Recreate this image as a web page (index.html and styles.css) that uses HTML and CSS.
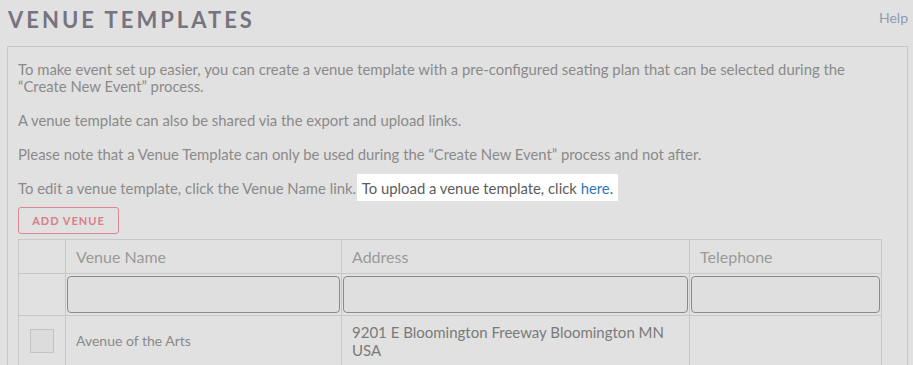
FILE: index.html
```html
<!DOCTYPE html>
<html lang="en">
<head>
    <meta charset="UTF-8">
    <title>Venue Templates</title>
    <link rel="stylesheet" href="styles.css">
</head>
<body>
    <div class="page-header">
        <h1 class="page-title">VENUE TEMPLATES</h1>
        <a href="#" class="help-link">Help</a>
    </div>

    <div class="panel">
        <p>To make event set up easier, you can create a venue template with a pre-configured seating plan that can be selected during the “Create New Event” process.</p>
        <p>A venue template can also be shared via the export and upload links.</p>
        <p>Please note that a Venue Template can only be used during the “Create New Event” process and not after.</p>
        <p>To edit a venue template, click the Venue Name link. <span class="tour-highlight">To upload a venue template, click <a href="#">here</a>.</span></p>

        <button type="button" class="add-button">ADD VENUE</button>

        <table class="venue-table">
            <thead>
                <tr class="head-row">
                    <th class="col-check"></th>
                    <th class="col-name">Venue Name</th>
                    <th class="col-address">Address</th>
                    <th class="col-phone">Telephone</th>
                </tr>
                <tr class="filter-row">
                    <td></td>
                    <td><input type="text"></td>
                    <td><input type="text"></td>
                    <td><input type="text"></td>
                </tr>
            </thead>
            <tbody>
                <tr class="data-row">
                    <td class="check-cell"><span class="checkbox"></span></td>
                    <td class="name-cell">Avenue of the Arts</td>
                    <td class="address-cell">9201 E Bloomington Freeway Bloomington MN USA</td>
                    <td></td>
                </tr>
            </tbody>
        </table>
    </div>
</body>
</html>
```

FILE: styles.css
```css
body {
    margin: 0;
    padding: 0 5px 0 7px;
    background-color: #e1e1e1;
    font-family: 'Lato', 'Open Sans', sans-serif;
    color: #8a8a8a;
}

.page-header {
    display: flex;
    justify-content: space-between;
    align-items: flex-start;
    height: 46px;
}

.page-title {
    margin: 6px 0 0 1px;
    font-size: 22px;
    font-weight: bold;
    letter-spacing: 3px;
    color: #77747f;
}

.help-link {
    margin-top: 9px;
    font-size: 14px;
    color: #8d9cb3;
    text-decoration: none;
}

.panel {
    border: 1px solid #c8c8c8;
    padding: 14px 10px 40px 10px;
}

.panel p {
    margin: 0 0 17px 0;
    font-size: 14.85px;
    line-height: 17px;
    padding-right: 20px;
}

.tour-highlight {
    background-color: #fff;
    color: #5c5c5c;
    margin-left: -3px;
    padding: 5px 5px 4px 5px;
}

.tour-highlight a {
    color: #2f78b7;
    text-decoration: none;
}

.add-button {
    display: block;
    width: 101px;
    height: 27px;
    margin-top: -7px;
    border: 1px solid #df8790;
    border-radius: 3px;
    background: transparent;
    color: #d97e88;
    font-family: 'Lato', sans-serif;
    font-size: 11px;
    font-weight: bold;
    letter-spacing: 1px;
}

.venue-table {
    margin-top: 5px;
    width: 864px;
    border-collapse: collapse;
    table-layout: fixed;
}

.venue-table th,
.venue-table td {
    box-sizing: border-box;
    border: 1px solid #c8c8c8;
}

.col-check { width: 47px; }
.col-name { width: 276px; }
.col-address { width: 348px; }

.head-row th {
    height: 34px;
    padding: 0 10px;
    text-align: left;
    font-size: 16px;
    font-weight: normal;
    color: #9a9a9a;
}

.filter-row td {
    height: 42px;
    padding: 0 1px;
}

.filter-row input {
    display: block;
    width: 100%;
    height: 37px;
    box-sizing: border-box;
    border: 1px solid #8a8a8a;
    border-radius: 4px;
    background: #dfdfdf;
}

.data-row td {
    height: 50px;
    padding: 0 10px;
    vertical-align: middle;
}

.check-cell {
    text-align: center;
}

.checkbox {
    display: inline-block;
    width: 22px;
    height: 22px;
    margin-top: 4px;
    border: 1px solid #c2c2c2;
    background-color: #dcdcdc;
}

.name-cell {
    font-size: 14px;
    color: #8a8a8a;
}

.address-cell {
    font-size: 15px;
    line-height: 18px;
    padding-bottom: 2px;
    color: #7a7a7a;
}
```
